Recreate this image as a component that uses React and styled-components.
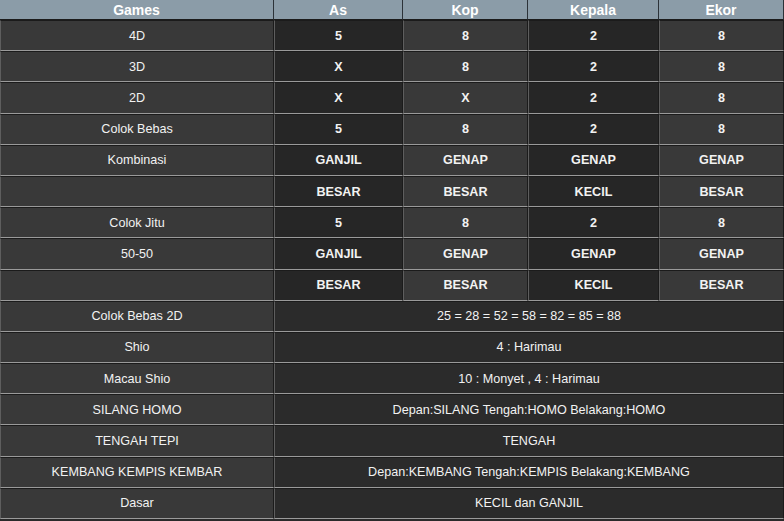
import React from 'react';
import styled, { createGlobalStyle } from 'styled-components';

const GlobalStyle = createGlobalStyle`
  body {
    margin: 0;
    background: #2a2a2a;
    font-family: "Liberation Sans", Arial, sans-serif;
  }
`;

const columns = ['Games', 'As', 'Kop', 'Kepala', 'Ekor'];

// each row: label + either 4 digits or one spanned value
const rows = [
  { label: '4D', cells: ['5', '8', '2', '8'] },
  { label: '3D', cells: ['X', '8', '2', '8'] },
  { label: '2D', cells: ['X', 'X', '2', '8'] },
  { label: 'Colok Bebas', cells: ['5', '8', '2', '8'] },
  { label: 'Kombinasi', cells: ['GANJIL', 'GENAP', 'GENAP', 'GENAP'] },
  { label: '', cells: ['BESAR', 'BESAR', 'KECIL', 'BESAR'] },
  { label: 'Colok Jitu', cells: ['5', '8', '2', '8'] },
  { label: '50-50', cells: ['GANJIL', 'GENAP', 'GENAP', 'GENAP'] },
  { label: '', cells: ['BESAR', 'BESAR', 'KECIL', 'BESAR'] },
  { label: 'Colok Bebas 2D', value: '25 = 28 = 52 = 58 = 82 = 85 = 88' },
  { label: 'Shio', value: '4 : Harimau' },
  { label: 'Macau Shio', value: '10 : Monyet , 4 : Harimau' },
  { label: 'SILANG HOMO', value: 'Depan:SILANG Tengah:HOMO Belakang:HOMO' },
  { label: 'TENGAH TEPI', value: 'TENGAH' },
  { label: 'KEMBANG KEMPIS KEMBAR', value: 'Depan:KEMBANG Tengah:KEMPIS Belakang:KEMBANG' },
  { label: 'Dasar', value: 'KECIL dan GANJIL' },
];

const App = () => (
  <>
    <GlobalStyle />
    <ResultTable>
      {columns.map((c) => (
        <HeadCell key={c}>{c}</HeadCell>
      ))}
      {rows.map((r, i) => (
        <React.Fragment key={i}>
          <Cell $tone="light">{r.label}</Cell>
          {r.value ? (
            <Cell $tone="mid" $span={4}>{r.value}</Cell>
          ) : (
            r.cells.map((v, j) => (
              <Cell key={j} $tone={j % 2 === 0 ? 'dark' : 'light'} $bold>
                {v}
              </Cell>
            ))
          )}
        </React.Fragment>
      ))}
    </ResultTable>
  </>
);

export default App;

const tones = {
  light: '#393939',
  dark: '#262626',
  mid: '#2b2b2b',
};

const ResultTable = styled.div`
  display: grid;
  grid-template-columns: 274px 129px 125px 131px 1fr;
  grid-template-rows: 20px;
  grid-auto-rows: 31.2px;
  width: 784px;
`;

const HeadCell = styled.div`
  display: flex;
  align-items: center;
  justify-content: center;
  background: #8b9ca8;
  color: #ffffff;
  font-size: 14px;
  font-weight: bold;
  border-right: 1px solid #2c3238;
  border-bottom: 1px solid #1c1c1c;
  box-sizing: border-box;
`;

const Cell = styled.div`
  grid-column: span ${(p) => p.$span || 1};
  display: flex;
  align-items: center;
  justify-content: center;
  background: ${(p) => tones[p.$tone]};
  color: #f2f2f2;
  font-size: 12.6px;
  font-weight: ${(p) => (p.$bold ? 'bold' : 'normal')};
  border-top: 1px solid #1b1b1b;
  border-bottom: 1px solid #9a9a9a;
  border-left: 1px solid #5e5e5e;
  border-right: 1px solid #1b1b1b;
  box-sizing: border-box;
`;
